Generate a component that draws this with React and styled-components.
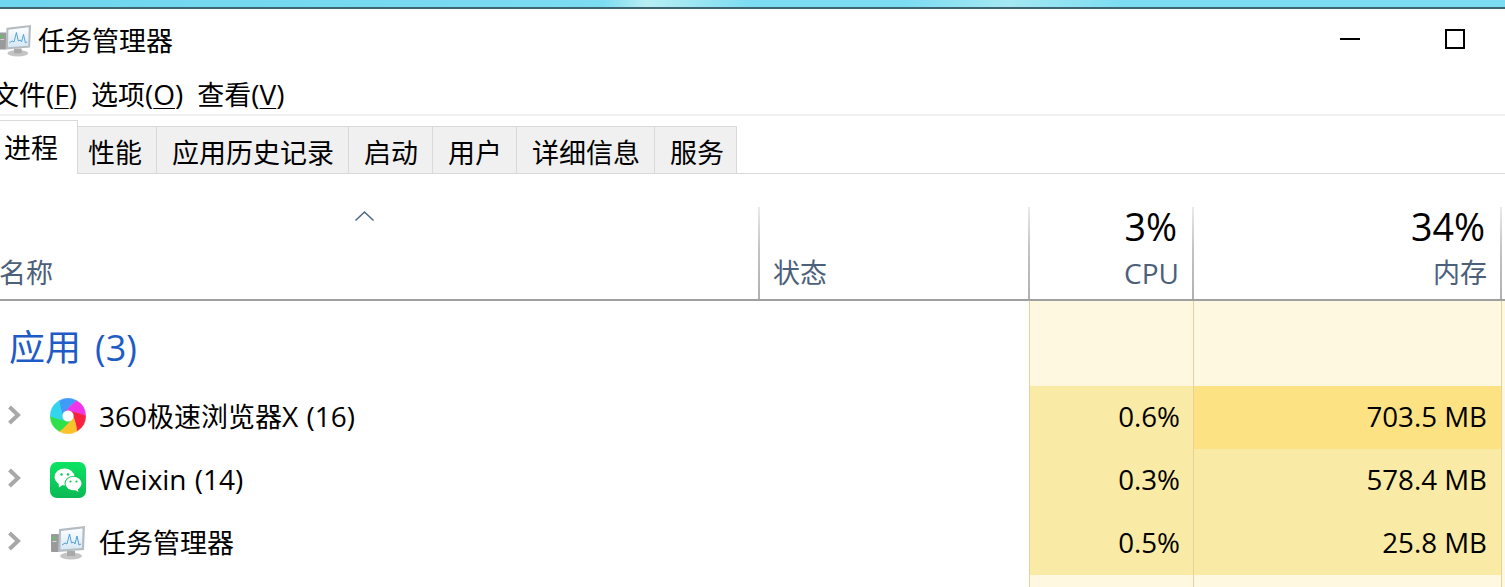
import React from 'react';
import styled, { createGlobalStyle } from 'styled-components';

const Global = createGlobalStyle`
  html, body {
    margin: 0;
    padding: 0;
    background: #fff;
    overflow: hidden;
  }
  body {
    font-family: "Open Sans", "Noto Sans CJK SC", sans-serif;
    color: #000;
  }
`;

const COLUMNS = '759px 270px 164px 308px 4px';
const HEADER_COLUMNS = '758px 270px 164px 308px 5px';

const Page = styled.div`
  width: 1505px;
  height: 587px;
  overflow: hidden;
  background: #fff;
  display: flex;
  flex-direction: column;
`;

const TopStrip = styled.div`
  height: 7px;
  flex: none;
  background: linear-gradient(90deg, #6fd6ef 0%, #7bdcf2 40%, #b8eef2 43%, #7bdcf2 50%, #7bdcf2 60%, #a4e8f2 67%, #7bdcf2 75%);
  border-bottom: 2px solid #3f6474;
`;

const TitleBar = styled.div`
  height: 67px;
  flex: none;
  box-sizing: border-box;
  display: flex;
  align-items: center;
  padding: 0 40px 3px 0;
  margin-left: -2px;
`;

const WindowTitle = styled.div`
  font-size: 27px;
  line-height: 36px;
  margin-left: 6px;
  flex: 1;
`;

const MinimizeButton = styled.div`
  width: 20px;
  height: 2px;
  margin: 0 85px 4px 0;
  background: #000;
`;

const MaximizeButton = styled.div`
  width: 20px;
  height: 20px;
  margin-bottom: 4px;
  box-sizing: border-box;
  border: 2px solid #000;
`;

const MenuBar = styled.div`
  height: 40px;
  flex: none;
  box-sizing: border-box;
  display: flex;
  align-items: center;
  gap: 14px;
  margin-left: -8px;
  padding-bottom: 1px;
  border-bottom: 2px solid #f0f0f0;
`;

const MenuItem = styled.span`
  font-size: 27px;
  line-height: 36px;
  white-space: nowrap;
  u {
    text-underline-offset: 3px;
    text-decoration-thickness: 1px;
  }
`;

const Latin = styled.span`
  font-size: 28px;
  word-spacing: 1px;
`;

const TabBar = styled.div`
  height: 58px;
  flex: none;
  box-sizing: border-box;
  display: flex;
  align-items: flex-end;
  border-bottom: 1px solid #d9d9d9;
`;

const Tab = styled.div`
  height: ${p => (p.$active ? '54px' : '47px')};
  box-sizing: border-box;
  padding: ${p => (p.$active ? '0 19px 3px 4px' : '2px 14px 0 15px')};
  display: flex;
  align-items: center;
  font-size: 27px;
  background: ${p => (p.$active ? '#fff' : '#f0f0f0')};
  border-top: 1px solid #d9d9d9;
  border-right: 1px solid #d9d9d9;
  margin-bottom: ${p => (p.$active ? '-1px' : '0')};
  &:nth-child(2) {
    padding-left: 10px;
  }
  &:last-child {
    padding-right: 12px;
  }
`;

const HeaderRow = styled.div`
  height: 127px;
  flex: none;
  box-sizing: border-box;
  display: grid;
  grid-template-columns: ${HEADER_COLUMNS};
  padding-top: 33px;
  border-bottom: 2px solid #a0a0a0;
`;

const HeaderCell = styled.div`
  box-sizing: border-box;
  display: flex;
  flex-direction: column;
  align-items: ${p => (p.$right ? 'flex-end' : 'flex-start')};
  justify-content: flex-end;
  padding: 0 ${p => (p.$right ? '13px' : '0')} 8px ${p => p.$pad || 0}px;
  border-left: ${p => (p.$first ? 'none' : '2px solid')};
  border-image: linear-gradient(#ececec, #c4c4c4 45%, #b0b0b0) 1;
`;

const SortChevron = styled.svg`
  width: 21px;
  height: 12px;
  margin: 0 0 33px 354px;
  display: block;
`;

const HeaderPercent = styled.div`
  font-size: 37.6px;
  line-height: 36px;
  margin: 0 2px 10px 0;
`;

const HeaderLabel = styled.div`
  font-size: ${p => (p.$latin ? '28px' : '27px')};
  line-height: 36px;
  margin-left: ${p => (p.$nudge ? '-1px' : '0')};
  color: #4c607a;
`;

const Body = styled.div`
  flex: 1;
  display: flex;
  flex-direction: column;
  min-height: 0;
`;

const TableRow = styled.div`
  height: ${p => p.$height}px;
  flex: none;
  display: grid;
  grid-template-columns: ${COLUMNS};
`;

const GroupName = styled.div`
  font-size: 36px;
  line-height: 44px;
  color: #1e5bc6;
  padding: 8px 0 0 9px;
  display: flex;
  align-items: center;
  white-space: pre;
  gap: 14px;
`;

const NameCell = styled.div`
  display: flex;
  align-items: center;
  padding-left: 7px;
`;

const Expander = styled.svg`
  width: 14px;
  height: 20px;
  flex: none;
  margin-bottom: 5px;
`;

const IconSlot = styled.div`
  width: 36px;
  height: 36px;
  flex: none;
  margin: 0 13px 1px 29px;
  display: flex;
  align-items: center;
  justify-content: center;
`;

const ProcessName = styled.span`
  font-size: 27px;
  line-height: 36px;
  white-space: nowrap;
  padding-bottom: 2px;
`;

const BlankCell = styled.div``;

const HeatCell = styled.div`
  box-sizing: border-box;
  background: ${p => p.$bg};
  border-left: 1px solid #e8cfa0;
  font-size: 27.7px;
  line-height: 36px;
  display: flex;
  align-items: center;
  justify-content: flex-end;
  padding: 0 ${p => p.$pad || 14}px 3px 0;
  white-space: nowrap;
`;

const LIGHT = '#fff8e1';
const MID = '#f9eaa6';
const HOT = '#fde283';

// six twisted wedges, start angle of each so the outer arc lands where the logo has that colour
const BLADES = [
  ['#3f9af8', -80], ['#ee36e8', -20], ['#f7243f', 40],
  ['#fcc22a', 100], ['#2fe04a', 160], ['#30d4ee', 220],
];

const Swirl = () => (
  <svg width="36" height="36" viewBox="0 0 36 36" style={{ marginBottom: 3 }}>
    <defs>
      <filter id="soft" x="-10%" y="-10%" width="120%" height="120%">
        <feGaussianBlur stdDeviation="0.55" />
      </filter>
    </defs>
    <g filter="url(#soft)">
      {BLADES.map(([c, a]) => (
        <path
          key={c}
          d="M18 12.5 Q26 8 31.5 6.7 A17.6 17.6 0 0 1 34.5 24 Q30.7 19.9 22.8 15.25 A5.5 5.5 0 0 0 18 12.5 Z"
          fill={c}
          stroke={c}
          strokeWidth="0.6"
          transform={`rotate(${a} 18 18)`}
        />
      ))}
    </g>
    <circle cx="18" cy="18" r="5.6" fill="#fff" stroke="#8a8" strokeWidth="0.5" strokeOpacity="0.35" />
  </svg>
);

const WeixinIcon = () => (
  <svg width="36" height="36" viewBox="0 0 36 36">
    <defs>
      <linearGradient id="wx" x1="0" y1="0" x2="0" y2="1">
        <stop offset="0" stopColor="#0be462" />
        <stop offset="1" stopColor="#0cb955" />
      </linearGradient>
    </defs>
    <rect width="36" height="36" rx="7" fill="url(#wx)" />
    <ellipse cx="14.5" cy="15" rx="10" ry="8.4" fill="#fff" />
    <path d="M8.5 20 L9 25.5 L14 22 Z" fill="#fff" />
    <ellipse cx="23.5" cy="21.5" rx="9" ry="7.6" fill="#0cc75a" />
    <ellipse cx="23.5" cy="21.5" rx="8" ry="6.8" fill="#fff" />
    <path d="M27.5 26 L28.5 30 L24 27.5 Z" fill="#fff" />
    <circle cx="11.5" cy="12.5" r="1.2" fill="#0cc75a" />
    <circle cx="18" cy="12.5" r="1.2" fill="#0cc75a" />
    <circle cx="20.5" cy="19.5" r="1.1" fill="#0cc75a" />
    <circle cx="26.5" cy="19.5" r="1.1" fill="#0cc75a" />
  </svg>
);

const MonitorIcon = ({ id, size = 36 }) => (
  <svg width={size} height={size} viewBox="0 0 36 36">
    <defs>
      <linearGradient id={`screen${id}`} x1="0" y1="0" x2="0" y2="1">
        <stop offset="0" stopColor="#fdfeff" />
        <stop offset="1" stopColor="#d6e8f4" />
      </linearGradient>
    </defs>
    <rect x="1" y="9" width="8" height="18" rx="1" fill="#9a9a9a" />
    <rect x="2.5" y="12" width="3" height="2.5" fill="#5fc35f" />
    <rect x="2.5" y="16" width="4" height="1" fill="#d8d8d8" />
    <ellipse cx="21" cy="31" rx="11" ry="3.5" fill="#c4c4c4" />
    <rect x="17" y="26" width="8" height="5" fill="#a9a9a9" />
    <path d="M9 4 L35 1 L34 25 L8 27 Z" fill="#b4bcc2" />
    <path d="M11 6 L32.5 3.5 L32 23 L10.5 24.5 Z" fill={`url(#screen${id})`} />
    <path
      d="M12 20 L15 18 L17 19 L19.5 9 L21.5 18 L23.5 17 L25 19 L27 11 L29 20 L31 19"
      fill="none"
      stroke="#4f9fd6"
      strokeWidth="1"
    />
  </svg>
);

const Chevron = () => (
  <Expander viewBox="0 0 14 20">
    <path d="M2.5 2 L11 10 L2.5 18" fill="none" stroke="#a8a8a8" strokeWidth="4" />
  </Expander>
);

const TABS = ['进程', '性能', '应用历史记录', '启动', '用户', '详细信息', '服务'];

const PROCESSES = [
  {
    name: <><Latin>360</Latin>极速浏览器<Latin>X (16)</Latin></>,
    key: 'browser',
    icon: <Swirl />,
    cpu: '0.6%',
    mem: '703.5 MB',
    memBg: HOT,
  },
  {
    name: <Latin>Weixin (14)</Latin>,
    key: 'weixin',
    icon: <WeixinIcon />,
    cpu: '0.3%',
    mem: '578.4 MB',
    memBg: MID,
  },
  {
    name: '任务管理器',
    key: 'taskmgr',
    icon: <MonitorIcon id="row" />,
    cpu: '0.5%',
    mem: '25.8 MB',
    memBg: MID,
  },
];

export default function App() {
  return (
    <Page>
      <Global />
      <TopStrip />
      <TitleBar>
        <MonitorIcon id="title" size={34} />
        <WindowTitle>任务管理器</WindowTitle>
        <MinimizeButton />
        <MaximizeButton />
      </TitleBar>
      <MenuBar>
        <MenuItem>文件<Latin>(<u>F</u>)</Latin></MenuItem>
        <MenuItem>选项<Latin>(<u>O</u>)</Latin></MenuItem>
        <MenuItem>查看<Latin>(<u>V</u>)</Latin></MenuItem>
      </MenuBar>
      <TabBar>
        {TABS.map((t, i) => (
          <Tab key={t} $active={i === 0}>{t}</Tab>
        ))}
      </TabBar>
      <HeaderRow>
        <HeaderCell $first>
          <SortChevron viewBox="0 0 21 12">
            <path d="M1.5 10.5 L10.5 2 L19.5 10.5" fill="none" stroke="#4c6a8a" strokeWidth="1.6" />
          </SortChevron>
          <HeaderLabel $nudge>名称</HeaderLabel>
        </HeaderCell>
        <HeaderCell $pad={13}>
          <HeaderLabel>状态</HeaderLabel>
        </HeaderCell>
        <HeaderCell $right>
          <HeaderPercent>3%</HeaderPercent>
          <HeaderLabel $latin>CPU</HeaderLabel>
        </HeaderCell>
        <HeaderCell $right>
          <HeaderPercent>34%</HeaderPercent>
          <HeaderLabel>内存</HeaderLabel>
        </HeaderCell>
        <HeaderCell />
      </HeaderRow>
      <Body>
        <TableRow $height={85}>
          <GroupName><span>应用</span><span>(3)</span></GroupName>
          <BlankCell />
          <HeatCell $bg={LIGHT} />
          <HeatCell $bg={LIGHT} />
          <HeatCell $bg={LIGHT} />
        </TableRow>
        {PROCESSES.map(p => (
          <TableRow key={p.key} $height={63}>
            <NameCell>
              <Chevron />
              <IconSlot>{p.icon}</IconSlot>
              <ProcessName>{p.name}</ProcessName>
            </NameCell>
            <BlankCell />
            <HeatCell $bg={MID} $pad={13}>{p.cpu}</HeatCell>
            <HeatCell $bg={p.memBg}>{p.mem}</HeatCell>
            <HeatCell $bg={LIGHT} />
          </TableRow>
        ))}
        <TableRow $height={12}>
          <BlankCell />
          <BlankCell />
          <HeatCell $bg={LIGHT} />
          <HeatCell $bg={LIGHT} />
          <HeatCell $bg={LIGHT} />
        </TableRow>
      </Body>
    </Page>
  );
}
